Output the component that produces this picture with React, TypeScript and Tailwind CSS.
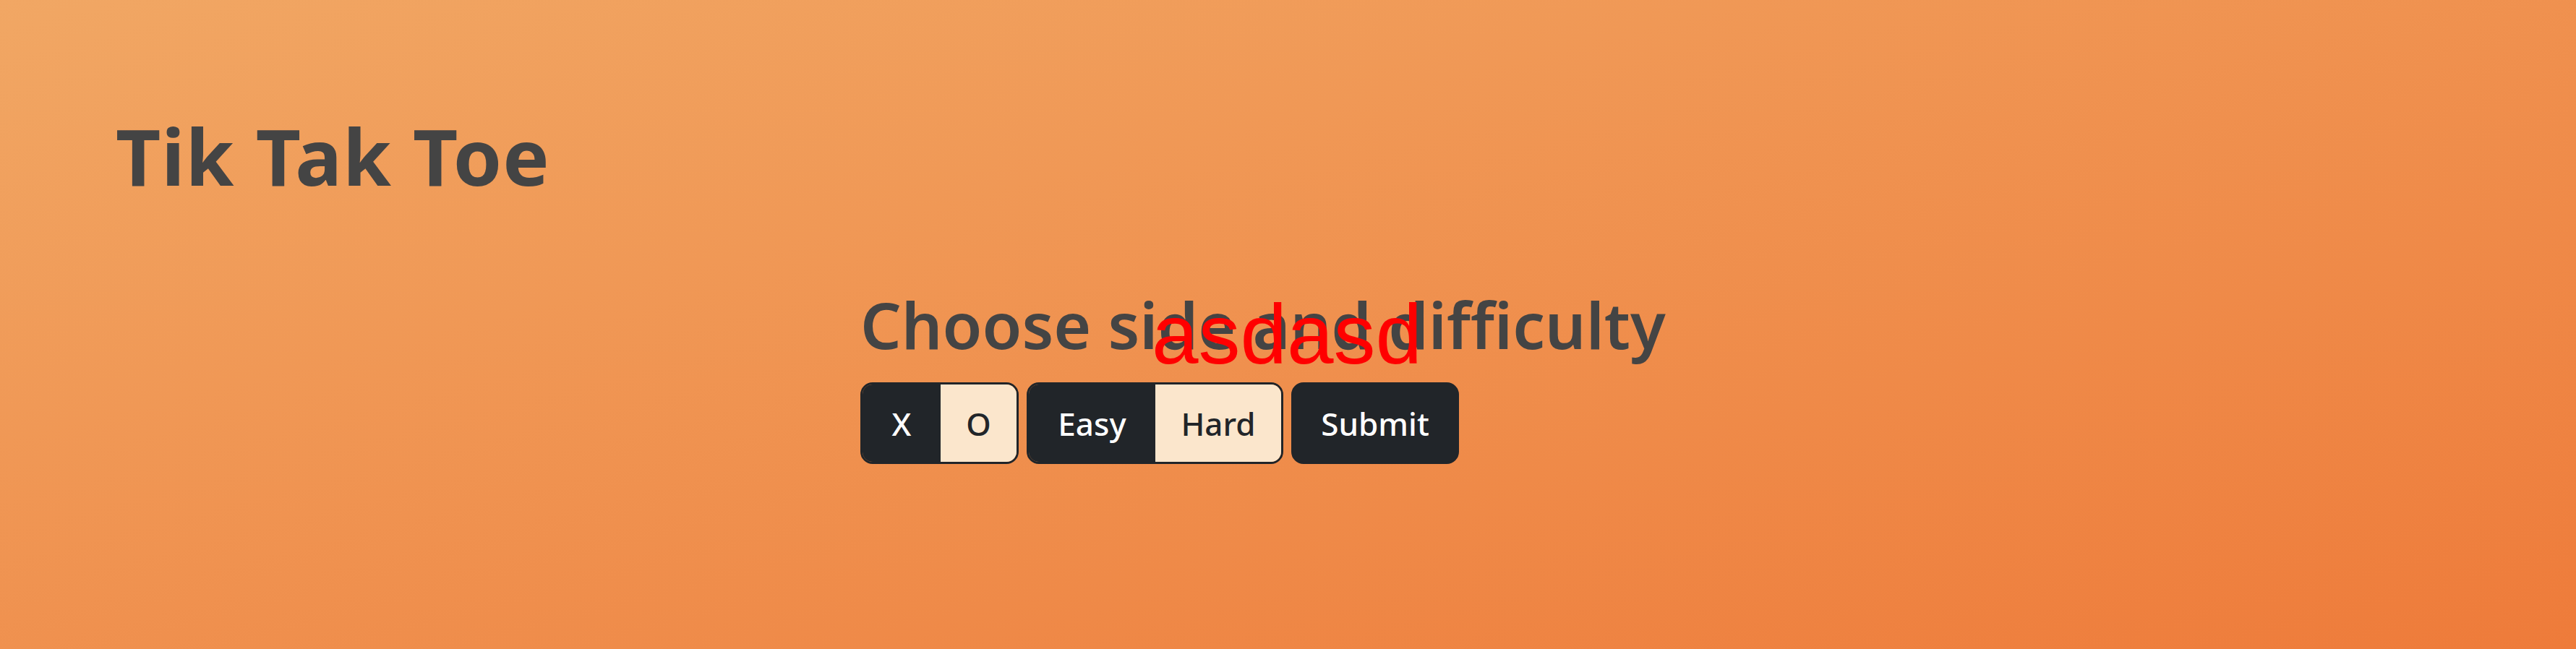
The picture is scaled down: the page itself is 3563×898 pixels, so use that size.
import React from 'react';

const SIDES = [
  { label: 'X', active: true, width: 'w-[108px]' },
  { label: 'O', active: false, width: 'w-[105px]' },
];

const LEVELS = [
  { label: 'Easy', active: true, width: 'w-[175px]' },
  { label: 'Hard', active: false, width: 'w-[174px]' },
];

type Option = { label: string; active: boolean; width: string };

const ToggleGroup: React.FC<{ options: Option[] }> = ({ options }) => (
  <div className="flex h-[113px] overflow-hidden rounded-[17px] border-[3px] border-[#212529]">
    {options.map(({ label, active, width }) => (
      <span
        key={label}
        className={
          active
            ? `${width} flex items-center justify-center bg-[#212529] text-white`
            : `${width} flex items-center justify-center bg-[#fbe6cc] text-[#212529]`
        }
      >
        {label}
      </span>
    ))}
  </div>
);

export default function App() {
  return (
    <div className="min-h-[898px] w-full overflow-hidden bg-[linear-gradient(to_bottom_right,#f1a764,#ee7b3a)] font-['Noto_Sans','Open_Sans',sans-serif] text-[#444444]">
      {/* TITLE */}
      <h1 className="pl-[160px] pt-[162px] text-[108px] font-bold leading-none tracking-[1px]">Tik Tak Toe</h1>

      {/* SETUP */}
      <div className="ml-[1190px] mt-[134px]">
        <div className="relative">
          <h2 className="text-[89px] font-semibold leading-none">Choose side and difficulty</h2>
          <span className="absolute left-[403px] top-[1px] font-['Liberation_Sans',Arial,sans-serif] text-[116px] leading-none text-[#ff0000]">
            asdasd
          </span>
        </div>

        <div className="mt-[36px] flex gap-[11px] text-[44px] font-medium">
          <ToggleGroup options={SIDES} />
          <ToggleGroup options={LEVELS} />
          <button className="flex h-[113px] w-[232px] items-center justify-center rounded-[17px] border-[3px] border-[#212529] bg-[#212529] text-white">
            Submit
          </button>
        </div>
      </div>
    </div>
  );
}
